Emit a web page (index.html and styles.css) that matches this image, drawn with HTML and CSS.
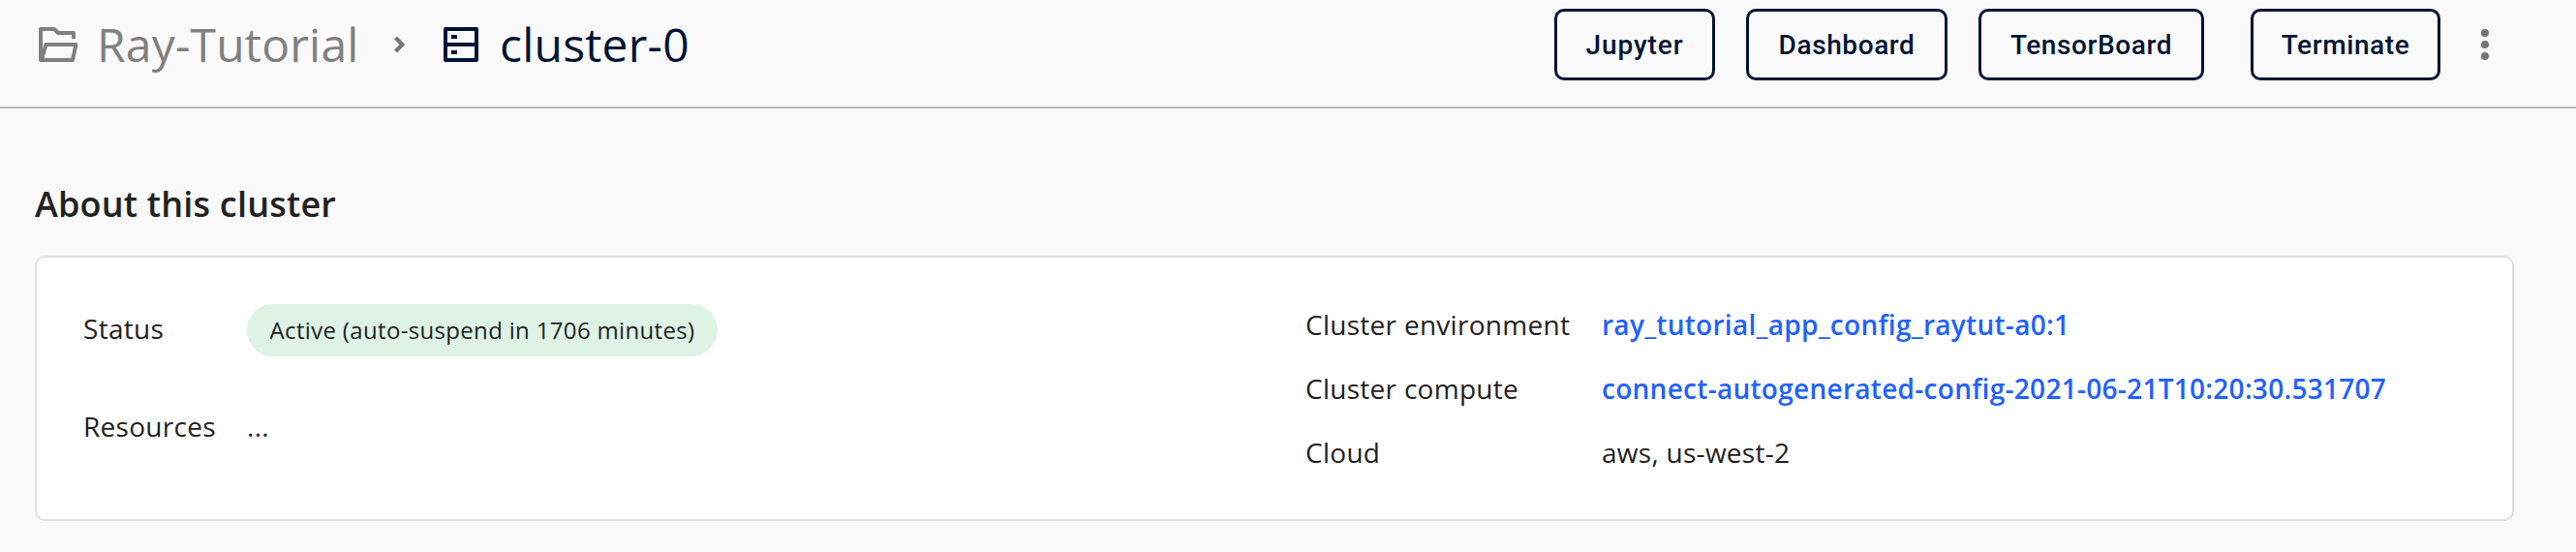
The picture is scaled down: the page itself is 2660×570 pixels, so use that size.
FILE: index.html
```html
<!DOCTYPE html>
<html lang="en">
<head>
<meta charset="utf-8">
<title>cluster-0</title>
<link rel="stylesheet" href="styles.css">
</head>
<body>
<header class="topbar">
  <nav class="breadcrumb">
    <svg class="folder-icon" viewBox="0 0 42 36" width="42" height="36" fill="none" stroke="currentColor" stroke-width="4" stroke-linejoin="round">
      <path d="M36 12V6H20L16 2H2V34H35L38.4 18H7.4L3 34"/>
    </svg>
    <a class="crumb project">Ray-Tutorial</a>
    <svg class="chevron" viewBox="0 0 12 18" width="12" height="18" fill="none" stroke="currentColor" stroke-width="4">
      <path d="M1.5 2L8.5 9L1.5 16"/>
    </svg>
    <svg class="cluster-icon" viewBox="0 0 36 36" width="36" height="36" fill="none" stroke="currentColor" stroke-width="4" stroke-linejoin="round">
      <path d="M2 2H34V34H2ZM2 18H34M8 10H14M8 26H14"/>
    </svg>
    <h1 class="crumb current">cluster-0</h1>
  </nav>
  <div class="actions">
    <button class="btn jupyter">Jupyter</button>
    <button class="btn dashboard">Dashboard</button>
    <button class="btn tensorboard">TensorBoard</button>
    <button class="btn terminate">Terminate</button>
    <svg class="more" viewBox="0 0 8 32" width="8" height="32" fill="currentColor">
      <circle cx="4" cy="4" r="4"/><circle cx="4" cy="16" r="4"/><circle cx="4" cy="28" r="4"/>
    </svg>
  </div>
</header>
<main class="content">
  <h2 class="section-title">About this cluster</h2>
  <section class="card">
    <dl class="details status-details">
      <dt>Status</dt>
      <dd><span class="pill">Active (auto-suspend in 1706 minutes)</span></dd>
      <dt>Resources</dt>
      <dd>...</dd>
    </dl>
    <dl class="details config-details">
      <dt>Cluster environment</dt>
      <dd><a class="link">ray_tutorial_app_config_raytut-a0:1</a></dd>
      <dt>Cluster compute</dt>
      <dd><a class="link">connect-autogenerated-config-2021-06-21T10:20:30.531707</a></dd>
      <dt>Cloud</dt>
      <dd>aws, us-west-2</dd>
    </dl>
  </section>
</main>
</body>
</html>
```
FILE: styles.css
```css
* { box-sizing: border-box; }
body {
  margin: 0;
  height: 570px;
  overflow: hidden;
  background: #fafafa;
  color: #222;
  font-family: "Open Sans", "Noto Sans", sans-serif;
  font-size: 28px;
}
h1, h2, dl, dd { margin: 0; }
.topbar {
  display: flex;
  justify-content: space-between;
  height: 112px;
  padding: 0 90px 18px 40px;
  border-bottom: 2px solid #b8b8b8;
}
.breadcrumb, .actions { display: flex; align-items: center; height: 92px; }
.breadcrumb { color: #808080; }
.crumb { font-size: 48px; font-weight: 400; line-height: 64px; letter-spacing: 0.2px; white-space: nowrap; }
.project { width: 268px; margin-left: 18px; }
.chevron { margin-left: 39px; color: #757575; }
.cluster-icon { margin-left: 39px; color: #001435; }
.current { margin-left: 22px; color: #001435; }
.btn {
  height: 74px;
  padding: 1px 0 0;
  border: 3px solid #001435;
  border-radius: 10px;
  background: transparent;
  color: #001435;
  font: 500 28px/36px Roboto, sans-serif;
  letter-spacing: 0.6px;
  white-space: nowrap;
}
.jupyter { width: 166px; margin-right: 32px; letter-spacing: 0.9px; }
.dashboard { width: 208px; margin-right: 32px; }
.tensorboard { width: 233px; margin-right: 48px; }
.terminate { width: 196px; }
.more { margin-left: 42px; color: #757575; }
.content { padding: 75px 64px 0 36px; }
.section-title { font-size: 36px; font-weight: 600; line-height: 48px; letter-spacing: 0.2px; }
.card {
  display: grid;
  grid-template-columns: 1262px 1fr;
  height: 274px;
  margin-top: 29px;
  padding: 48px 49px 0 48px;
  border: 2px solid #e0e0e0;
  border-radius: 10px;
  background: #fff;
}
.details { display: grid; align-content: start; line-height: 38px; letter-spacing: 0.28px; white-space: nowrap; }
.status-details { grid-template-columns: 169px 1fr; grid-template-rows: 54px 38px; row-gap: 53px; }
.status-details dt:first-child { padding-top: 6px; }
.config-details { grid-template-columns: 306px 1fr; grid-auto-rows: 38px; row-gap: 28px; padding-top: 2px; }
.pill {
  display: block;
  width: 486px;
  height: 54px;
  border-radius: 27px;
  background: #def2e6;
  font-size: 24px;
  line-height: 54px;
  letter-spacing: 0.33px;
  text-align: center;
}
.link { color: #1f62ff; font-weight: 600; }
```
